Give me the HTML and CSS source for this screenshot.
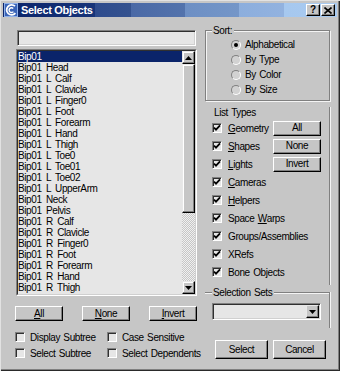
FILE: index.html
```html
<!DOCTYPE html>
<html>
<head>
<meta charset="utf-8">
<title>Select Objects</title>
<link rel="stylesheet" href="styles.css">
</head>
<body>
<div class="window">
  <div class="titlebar">
    <svg class="app-icon" width="14" height="14" viewBox="0 0 14 14">
      <rect x="0.5" y="0.5" width="13" height="13" fill="#3a64b8" stroke="#8fb0e8"/>
      <path d="M11 3.2 A5 5 0 1 0 11.4 10.2" stroke="#fff" stroke-width="1.8" fill="none"/>
      <path d="M9.2 5.4 A2.4 2.4 0 1 0 9.4 8.6" stroke="#fff" stroke-width="1.4" fill="none"/>
    </svg>
    <span class="title">Select Objects</span>
    <div class="caption-btns">
      <span class="cap-btn q">?</span>
      <span class="cap-btn"><svg width="8" height="7" viewBox="0 0 8 7"><path d="M0.5 0.5 L7.5 6.5 M7.5 0.5 L0.5 6.5" stroke="#000" stroke-width="1.6"/></svg></span>
    </div>
  </div>
  <div class="content">
    <div class="left">
      <div class="field filter"></div>
      <div class="list">
        <div class="list-inner">
          <ul class="items">
            <li class="sel">Bip01</li>
            <li>Bip01 Head</li>
            <li>Bip01 L Calf</li>
            <li>Bip01 L Clavicle</li>
            <li>Bip01 L Finger0</li>
            <li>Bip01 L Foot</li>
            <li>Bip01 L Forearm</li>
            <li>Bip01 L Hand</li>
            <li>Bip01 L Thigh</li>
            <li>Bip01 L Toe0</li>
            <li>Bip01 L Toe01</li>
            <li>Bip01 L Toe02</li>
            <li>Bip01 L UpperArm</li>
            <li>Bip01 Neck</li>
            <li>Bip01 Pelvis</li>
            <li>Bip01 R Calf</li>
            <li>Bip01 R Clavicle</li>
            <li>Bip01 R Finger0</li>
            <li>Bip01 R Foot</li>
            <li>Bip01 R Forearm</li>
            <li>Bip01 R Hand</li>
            <li>Bip01 R Thigh</li>
          </ul>
          <div class="scrollbar">
            <div class="sb-btn"><svg width="7" height="4" viewBox="0 0 7 4"><path d="M3.5 0 L7 4 L0 4 Z" fill="#000"/></svg></div>
            <div class="sb-thumb"></div>
            <div class="sb-track"></div>
            <div class="sb-btn"><svg width="7" height="4" viewBox="0 0 7 4"><path d="M0 0 L7 0 L3.5 4 Z" fill="#000"/></svg></div>
          </div>
        </div>
      </div>
      <div class="btn-row">
        <span class="btn"><u>A</u>ll</span>
        <span class="btn"><u>N</u>one</span>
        <span class="btn"><u>I</u>nvert</span>
      </div>
      <div class="opts">
        <span class="opt"><span class="cb"></span>Display Subtree</span>
        <span class="opt"><span class="cb"></span>Case Sensitive</span>
        <span class="opt"><span class="cb"></span>Select Subtree</span>
        <span class="opt"><span class="cb"></span>Select Dependents</span>
      </div>
    </div>
    <div class="right">
      <div class="group sort">
        <span class="legend">Sort:</span>
        <div class="radio-row"><span class="radio on"></span>Alphabetical</div>
        <div class="radio-row"><span class="radio"></span>By Type</div>
        <div class="radio-row"><span class="radio"></span>By Color</div>
        <div class="radio-row"><span class="radio"></span>By Size</div>
      </div>
      <div class="types">
        <div class="types-label">List Types</div>
        <div class="types-grid">
          <span class="opt"><span class="cb on"><svg width="8" height="8" viewBox="0 0 8 8"><path d="M1 3.6 L3 5.6 L7 1.4" stroke="#000" stroke-width="1.8" fill="none"/></svg></span><u>G</u>eometry</span>
          <span class="btn">All</span>
          <span class="opt"><span class="cb on"><svg width="8" height="8" viewBox="0 0 8 8"><path d="M1 3.6 L3 5.6 L7 1.4" stroke="#000" stroke-width="1.8" fill="none"/></svg></span><u>S</u>hapes</span>
          <span class="btn">None</span>
          <span class="opt"><span class="cb on"><svg width="8" height="8" viewBox="0 0 8 8"><path d="M1 3.6 L3 5.6 L7 1.4" stroke="#000" stroke-width="1.8" fill="none"/></svg></span><u>L</u>ights</span>
          <span class="btn">Invert</span>
          <span class="opt wide"><span class="cb on"><svg width="8" height="8" viewBox="0 0 8 8"><path d="M1 3.6 L3 5.6 L7 1.4" stroke="#000" stroke-width="1.8" fill="none"/></svg></span><u>C</u>ameras</span>
          <span class="opt wide"><span class="cb on"><svg width="8" height="8" viewBox="0 0 8 8"><path d="M1 3.6 L3 5.6 L7 1.4" stroke="#000" stroke-width="1.8" fill="none"/></svg></span><u>H</u>elpers</span>
          <span class="opt wide"><span class="cb on"><svg width="8" height="8" viewBox="0 0 8 8"><path d="M1 3.6 L3 5.6 L7 1.4" stroke="#000" stroke-width="1.8" fill="none"/></svg></span>Space <u>W</u>arps</span>
          <span class="opt wide"><span class="cb on"><svg width="8" height="8" viewBox="0 0 8 8"><path d="M1 3.6 L3 5.6 L7 1.4" stroke="#000" stroke-width="1.8" fill="none"/></svg></span>Groups/Assemblies</span>
          <span class="opt wide"><span class="cb on"><svg width="8" height="8" viewBox="0 0 8 8"><path d="M1 3.6 L3 5.6 L7 1.4" stroke="#000" stroke-width="1.8" fill="none"/></svg></span>XRefs</span>
          <span class="opt wide"><span class="cb on"><svg width="8" height="8" viewBox="0 0 8 8"><path d="M1 3.6 L3 5.6 L7 1.4" stroke="#000" stroke-width="1.8" fill="none"/></svg></span>Bone Objects</span>
        </div>
      </div>
      <div class="group sets">
        <span class="legend">Selection Sets</span>
        <div class="field combo">
          <span class="combo-btn"><svg width="7" height="4" viewBox="0 0 7 4"><path d="M0 0 L7 0 L3.5 4 Z" fill="#000"/></svg></span>
        </div>
      </div>
      <div class="action-row">
        <span class="btn big">Select</span>
        <span class="btn big">Cancel</span>
      </div>
    </div>
  </div>
</div>
</body>
</html>
```

FILE: styles.css
```css
* { box-sizing: border-box; margin: 0; padding: 0; }

body {
  background: #c6c6c6;
  font-family: "Liberation Sans", Arial, sans-serif;
  font-size: 10px;
  letter-spacing: -0.4px;
  word-spacing: 1px;
  color: #000;
}

.window {
  width: 340px;
  height: 371px;
  padding: 3px;
  background: #c6c6c6;
  box-shadow: inset 1px 1px #e2e2e2, inset -1px -1px #2a2a2a, inset -2px -2px #808080;
}

/* title bar */
.titlebar {
  height: 14px;
  display: flex;
  align-items: center;
  background: linear-gradient(90deg,
    #0a246a 0, #173479 27.5%,
    #2d4b8d 27.5%, #34528f 38.3%,
    #4a69a6 38.3%, #5373ac 54.5%,
    #6d8fc4 54.5%, #7496c8 70.7%,
    #8caedd 70.7%, #92b2df 84%,
    #a6c8ef 84%, #a8caf0 100%);
}
.app-icon { margin-left: 1px; flex: none; }
.title {
  margin-left: 3px;
  color: #fff;
  font-weight: bold;
  font-size: 11px;
  letter-spacing: -0.3px;
  word-spacing: 0;
  line-height: 14px;
}
.caption-btns {
  margin-left: auto;
  margin-right: 2px;
  display: flex;
  gap: 1px;
}
.cap-btn {
  width: 14px;
  height: 12px;
  display: flex;
  align-items: center;
  justify-content: center;
  background: #c6c6c6;
  border: 1px solid;
  border-color: #fff #000 #000 #fff;
  box-shadow: inset -1px -1px #808080;
  font-weight: bold;
  font-size: 10px;
  letter-spacing: 0;
  line-height: 10px;
}

/* content */
.content {
  display: flex;
  gap: 8px;
  padding-left: 12px;
}
.left { width: 182px; flex: none; }
.right { width: 125px; flex: none; }

/* sunken field */
.field {
  background: #e6e6e6;
  border: 1px solid;
  border-color: #808080 #fff #fff #808080;
  box-shadow: inset 1px 1px #303030, inset -1px -1px #d0d0d0;
}
.filter {
  margin: 13px 0 0 2px;
  width: 179px;
  height: 16px;
}

/* list */
.list {
  margin: 3px 0 0 1px;
  width: 181px;
  height: 247px;
  border: 1px solid;
  border-color: #808080 #fff #fff #808080;
}
.list-inner {
  height: 100%;
  display: flex;
  border: 1px solid;
  border-color: #303030 #d0d0d0 #d0d0d0 #303030;
  background: #e6e6e6;
}
.items {
  list-style: none;
  flex: 1;
}
.items li {
  height: 11px;
  line-height: 11px;
  white-space: nowrap;
  padding-left: 0;
  word-spacing: 2px;
}
.items li.sel {
  background: #0a246a;
  color: #fff;
}

.scrollbar {
  width: 13px;
  flex: none;
  display: flex;
  flex-direction: column;
}
.sb-btn {
  width: 13px;
  height: 13px;
  flex: none;
  display: flex;
  align-items: center;
  justify-content: center;
  background: #c6c6c6;
  border: 1px solid;
  border-color: #e8e8e8 #000 #000 #e8e8e8;
  box-shadow: inset -1px -1px #808080, inset 1px 1px #fff;
}
.sb-thumb {
  height: 149px;
  flex: none;
  background: #c6c6c6;
  border: 1px solid;
  border-color: #e8e8e8 #000 #000 #e8e8e8;
  box-shadow: inset -1px -1px #808080, inset 1px 1px #fff;
}
.sb-track {
  flex: 1;
  background: repeating-conic-gradient(#f0f0f0 0 25%, #c6c6c6 0 50%) 0 0 / 2px 2px;
}

/* buttons */
.btn {
  display: flex;
  align-items: center;
  justify-content: center;
  width: 48px;
  height: 15px;
  background: #c6c6c6;
  border: 1px solid;
  border-color: #fff #000 #000 #fff;
  box-shadow: inset -1px -1px #808080;
  line-height: 12px;
}
.btn-row {
  margin-top: 10px;
  display: flex;
  justify-content: space-between;
}

/* checkboxes */
.opts {
  margin-top: 11px;
  display: grid;
  grid-template-columns: 92px 1fr;
  row-gap: 6px;
}
.opt {
  display: flex;
  align-items: center;
  height: 10px;
  white-space: pre;
}
.cb {
  width: 10px;
  height: 10px;
  flex: none;
  margin-right: 5px;
  background: #e6e6e6;
  border: 1px solid;
  border-color: #808080 #fff #fff #808080;
  box-shadow: inset 1px 1px #303030;
  display: flex;
  align-items: center;
  justify-content: center;
}
.cb svg { display: block; }

/* group boxes */
.group {
  position: relative;
  border: 1px solid #808080;
  box-shadow: 1px 1px #f4f4f4, inset 1px 1px #f4f4f4;
}
.legend {
  position: absolute;
  top: -6px;
  left: 6px;
  padding: 0 2px 0 1px;
  background: #c6c6c6;
  line-height: 11px;
}
.sort {
  margin-top: 13px;
  height: 71px;
  padding: 6px 0 0 25px;
}
.radio-row {
  height: 15px;
  display: flex;
  align-items: center;
}
.radio {
  width: 10px;
  height: 10px;
  margin-right: 4px;
  border-radius: 50%;
  background: #d2d2d2;
  border: 1px solid;
  border-color: #808080 #fff #fff #808080;
  display: flex;
  align-items: center;
  justify-content: center;
}
.radio.on::after {
  content: "";
  width: 4px;
  height: 4px;
  border-radius: 50%;
  background: #000;
}

/* list types */
.types {
  margin-top: 6px;
  height: 178px;
  border-right: 1px solid #808080;
  box-shadow: 1px 0 #f4f4f4;
}
.types-label {
  padding-left: 9px;
  line-height: 11px;
  height: 11px;
}
.types-grid {
  margin-top: 1px;
  padding: 0 8px 0 7px;
  display: grid;
  grid-template-columns: 1fr 48px;
  grid-auto-rows: 18px;
  align-items: center;
}
.types-grid .cb { margin-right: 6px; }
.types-grid .wide { grid-column: 1 / 3; }

/* selection sets */
.sets {
  margin-top: 7px;
  height: 36px;
  border-left: none;
  border-bottom: none;
  box-shadow: 1px 0 #f4f4f4, inset 0 1px #f4f4f4;
}
.sets .legend { left: 7px; }
.combo {
  margin: 10px 0 0 7px;
  width: 109px;
  height: 17px;
  display: flex;
  justify-content: flex-end;
  padding: 1px;
}
.combo-btn {
  width: 13px;
  height: 13px;
  display: flex;
  align-items: center;
  justify-content: center;
  background: #c6c6c6;
  border: 1px solid;
  border-color: #e8e8e8 #000 #000 #e8e8e8;
  box-shadow: inset -1px -1px #808080;
}

.action-row {
  margin: 12px 0 0 10px;
  display: flex;
  gap: 5px;
}
.btn.big {
  width: 53px;
  height: 19px;
}
```
